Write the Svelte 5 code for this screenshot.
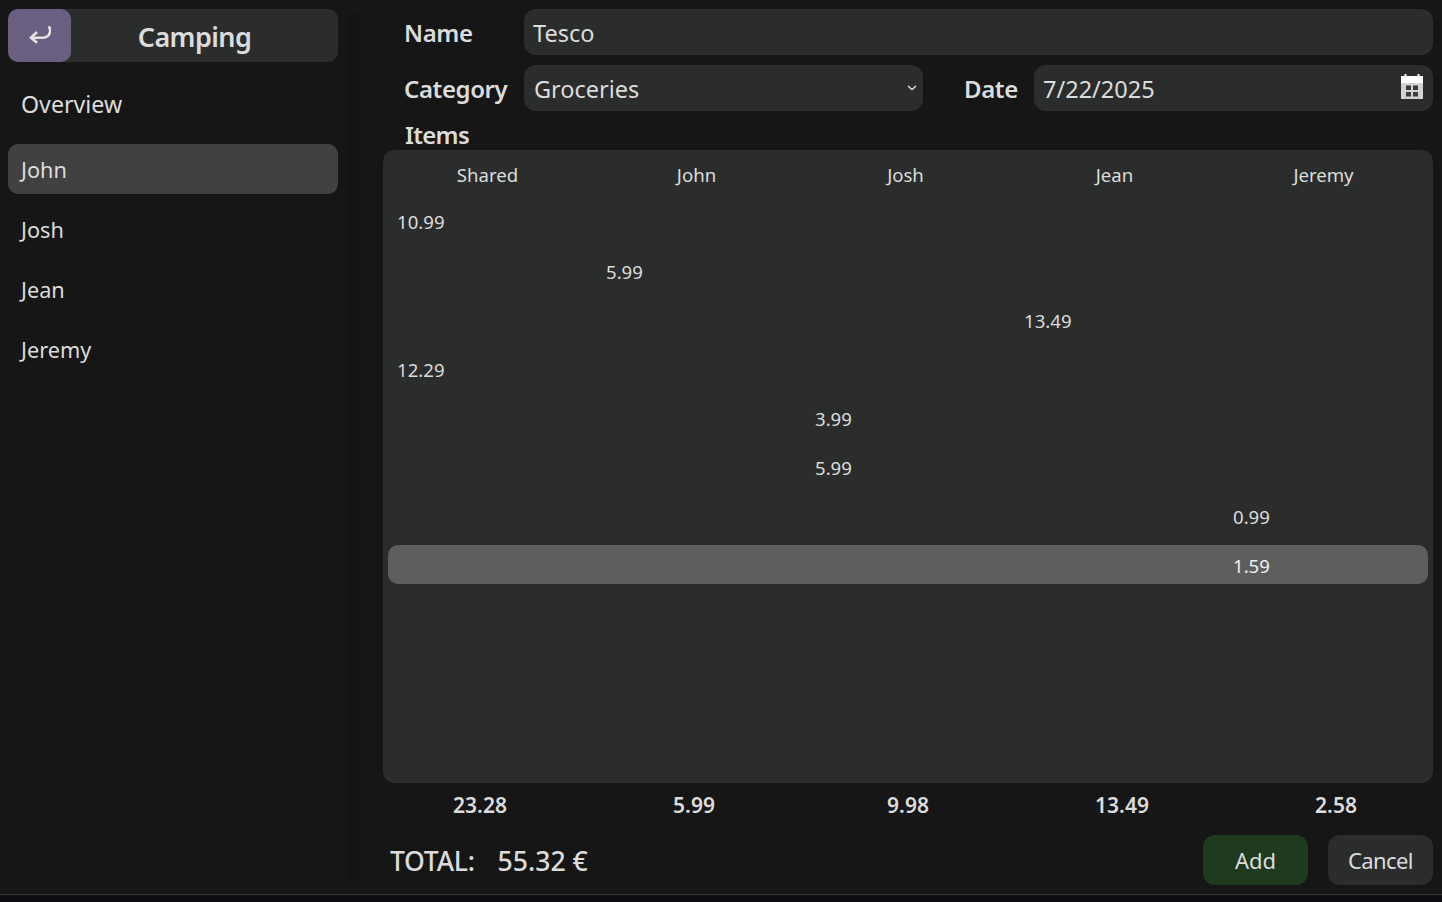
<script>
    let people = ['Shared', 'John', 'Josh', 'Jean', 'Jeremy'];
    let sidebarPeople = ['John', 'Josh', 'Jean', 'Jeremy'];
    let selectedPerson = 'John';

    // column is where the price sits, 0 is Shared
    let items = [
        { column: 0, price: '10.99' },
        { column: 1, price: '5.99' },
        { column: 3, price: '13.49' },
        { column: 0, price: '12.29' },
        { column: 2, price: '3.99' },
        { column: 2, price: '5.99' },
        { column: 4, price: '0.99' },
        { column: 4, price: '1.59', selected: true }
    ];

    let totals = ['23.28', '5.99', '9.98', '13.49', '2.58'];
</script>

<div class="window">
    <aside class="sidebar">
        <div class="title-bar">
            <button class="back" aria-label="Back">
                <svg width="22" height="20" viewBox="0 0 22 20" fill="none" stroke="currentColor" stroke-width="2.6">
                    <path d="M19.500 2.500c1.600 1.600 2 3.500 1.500 5.500-0.800 3.500-3.500 5.500-7 5.800H2" />
                    <path d="M8 8 2 13.800l6 5" />
                </svg>
            </button>
            <span class="trip-name">Camping</span>
        </div>
        <div class="overview">Overview</div>
        <nav class="people">
            {#each sidebarPeople as person}
                <div class="person" class:active={person === selectedPerson}>{person}</div>
            {/each}
        </nav>
    </aside>

    <div class="divider"></div>

    <main class="editor">
        <div class="field-row">
            <label class="field-label" for="name">Name</label>
            <input id="name" class="box name-input" type="text" value="Tesco" />
        </div>
        <div class="field-row">
            <label class="field-label" for="category">Category</label>
            <div class="box select-box">
                <select id="category">
                    <option>Groceries</option>
                </select>
                <svg width="10" height="6" viewBox="0 0 10 6" fill="none" stroke="currentColor" stroke-width="1.5">
                    <path d="M1 1l4 3.600L9 1" />
                </svg>
            </div>
            <label class="field-label date-label" for="date">Date</label>
            <div class="box date-box">
                <input id="date" type="text" value="7/22/2025" />
                <svg class="calendar" width="22" height="25" viewBox="0 0 22 25">
                    <path fill="#fff" d="M0 2h3.500V0h2v2h11V0h2v2H22v7H0z" />
                    <path fill="#d2d2d2" d="M0 9h22v16H0z" />
                    <path fill="#3c3c3c" d="M5 11.500h5v4.500H5zM12 11.500h5v4.500h-5zM5 18h5v4.500H5zM12 18h5v4.500h-5z" />
                </svg>
            </div>
        </div>

        <div class="items-label">Items</div>
        <section class="items">
            <div class="items-head">
                {#each people as person}
                    <span>{person}</span>
                {/each}
            </div>
            <div class="items-rows">
                {#each items as item}
                    <div class="item-row" class:selected={item.selected}>
                        {#each people as _, i}
                            <span>{i === item.column ? item.price : ''}</span>
                        {/each}
                    </div>
                {/each}
            </div>
        </section>

        <div class="totals">
            {#each totals as total}
                <span>{total}</span>
            {/each}
        </div>

        <div class="footer">
            <div class="grand-total"><span class="total-word">TOTAL:</span><span>55.32 €</span></div>
            <div class="actions">
                <button class="action add">Add</button>
                <button class="action cancel">Cancel</button>
            </div>
        </div>
    </main>
</div>

<style>
    :global(body) {
        background-color: #0b0d10;
        font-family: "Noto Sans", "Open Sans", sans-serif;
        color: #dcdcdc;
    }

    .window {
        display: flex;
        height: 895px;
        box-sizing: border-box;
        background-color: #161616;
        border-bottom: 1px solid #3c3c3c;
    }

    .sidebar {
        width: 330px;
        padding: 9px 0 0 8px;
        flex-shrink: 0;
    }

    .title-bar {
        display: flex;
        align-items: center;
        height: 53px;
        background-color: #2b2d2d;
        border-radius: 10px;
    }

    .back {
        width: 63px;
        height: 53px;
        display: flex;
        align-items: center;
        justify-content: center;
        padding: 0 0 3px;
        border: none;
        border-radius: 10px;
        background-color: #6a5f80;
        color: #e2e2e2;
    }

    .trip-name {
        flex: 1;
        text-align: center;
        font-size: 27px;
        font-weight: 600;
        letter-spacing: -0.6px;
        padding-right: 20px;
        padding-top: 2px;
    }

    .overview {
        height: 50px;
        line-height: 50px;
        margin-top: 17px;
        padding-left: 13px;
        font-size: 23.200px;
    }

    .people {
        display: flex;
        flex-direction: column;
        gap: 10px;
        margin-top: 15px;
    }

    .person {
        height: 50px;
        line-height: 52px;
        padding-left: 13px;
        font-size: 21.700px;
        border-radius: 10px;
    }

    .person.active {
        background-color: #414141;
    }

    .divider {
        width: 12px;
        margin: 12px 0 12px 10px;
        background-color: #131313;
        border-radius: 6px;
        flex-shrink: 0;
    }

    .editor {
        flex: 1;
        min-width: 0;
        padding: 9px 9px 0 23px;
        display: flex;
        flex-direction: column;
    }

    .field-row {
        display: flex;
        align-items: center;
        height: 46px;
        margin-bottom: 10px;
    }

    .field-label {
        width: 141px;
        padding-left: 21px;
        box-sizing: border-box;
        flex-shrink: 0;
        font-size: 24px;
        font-weight: 600;
        letter-spacing: -0.4px;
    }

    .date-label {
        width: 70px;
        padding: 0;
        margin-left: 41px;
    }

    .box {
        height: 46px;
        box-sizing: border-box;
        background-color: #2b2d2d;
        border: none;
        border-radius: 12px;
        color: #dcdcdc;
        font-family: inherit;
        font-size: 23.500px;
    }

    .name-input {
        flex: 1;
        min-width: 0;
        padding: 1px 9px 0;
        outline: none;
    }

    .select-box {
        width: 399px;
        display: flex;
        align-items: center;
        padding-right: 6px;
    }

    .select-box select {
        flex: 1;
        min-width: 0;
        height: 100%;
        appearance: none;
        padding: 1px 10px 0;
        background: transparent;
        border: none;
        outline: none;
        color: inherit;
        font: inherit;
    }

    .date-box {
        flex: 1;
        display: flex;
        align-items: center;
        padding: 0 10px 0 9px;
    }

    .date-box input {
        flex: 1;
        min-width: 0;
        padding: 1px 0 0;
        background: transparent;
        border: none;
        outline: none;
        color: inherit;
        font: inherit;
    }

    .calendar {
        margin-bottom: 4px;
    }

    .items-label {
        height: 33px;
        margin-top: -4px;
        padding-left: 22px;
        line-height: 36px;
        font-size: 24px;
        font-weight: 600;
        letter-spacing: -0.7px;
    }

    .items {
        height: 633px;
        flex-shrink: 0;
        background-color: #2b2d2d;
        border-radius: 12px;
        font-size: 18.600px;
    }

    .items-head {
        display: grid;
        grid-template-columns: repeat(5, 209px);
        height: 51.400px;
        box-sizing: border-box;
        padding-bottom: 2px;
        align-items: center;
        text-align: center;
    }

    .items-rows {
        display: flex;
        flex-direction: column;
        gap: 10.140px;
        padding: 0 5px;
    }

    .item-row {
        display: grid;
        grid-template-columns: repeat(5, 204px);
        column-gap: 5px;
        align-items: center;
        height: 39px;
        box-sizing: border-box;
        padding: 2px 0 0 9px;
        border-radius: 10px;
    }

    .item-row.selected {
        background-color: #5e5e5e;
        color: #f0f0f0;
    }

    .totals {
        display: grid;
        grid-template-columns: repeat(5, 214px);
        margin-left: -10px;
        height: 44px;
        align-items: center;
        text-align: center;
        font-size: 21px;
        font-weight: 600;
    }

    .footer {
        display: flex;
        align-items: center;
        justify-content: space-between;
        height: 50px;
        margin-top: 8px;
        padding-left: 7px;
    }

    .grand-total {
        display: flex;
        gap: 23px;
        padding-top: 2px;
        font-size: 26.600px;
        font-weight: 500;
    }

    .total-word {
        letter-spacing: -0.3px;
    }

    .actions {
        display: flex;
        gap: 20px;
    }

    .action {
        width: 105px;
        height: 50px;
        border: none;
        border-radius: 12px;
        background-color: #2b2d2d;
        color: #dcdcdc;
        font-family: inherit;
        font-size: 22px;
    }

    .action.add {
        background-color: #1e3a1f;
    }

    .action.cancel {
        letter-spacing: -0.6px;
    }
</style>
